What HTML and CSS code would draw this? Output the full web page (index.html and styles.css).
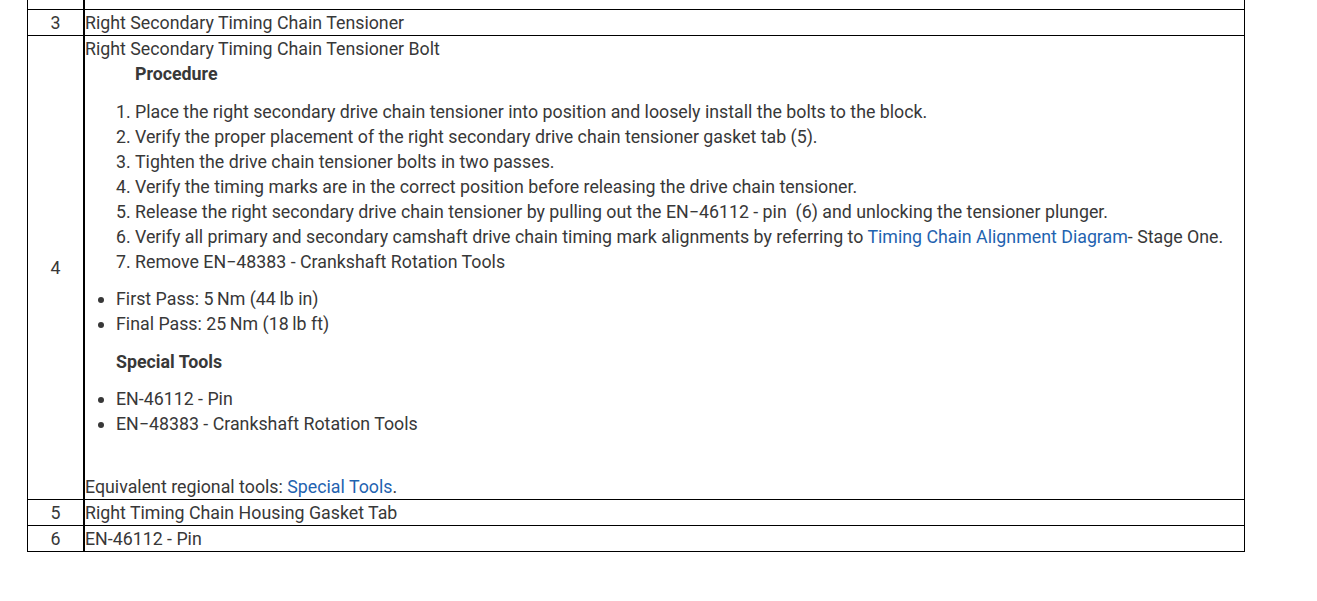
FILE: index.html
```html
<!DOCTYPE html>
<html>
<head>
<meta charset="utf-8">
<link rel="stylesheet" href="styles.css">
</head>
<body>
<table class="parts">
  <tr class="cut"><td class="num"></td><td class="desc"></td></tr>
  <tr><td class="num">3</td><td class="desc">Right Secondary Timing Chain Tensioner</td></tr>
  <tr>
    <td class="num">4</td>
    <td class="desc">
      <div>Right Secondary Timing Chain Tensioner Bolt</div>
      <div class="proc-title">Procedure</div>
      <ol class="steps">
        <li>Place the right secondary drive chain tensioner into position and loosely install the bolts to the block.</li>
        <li>Verify the proper placement of the right secondary drive chain tensioner gasket tab (5).</li>
        <li>Tighten the drive chain tensioner bolts in two passes.</li>
        <li>Verify the timing marks are in the correct position before releasing the drive chain tensioner.</li>
        <li>Release the right secondary drive chain tensioner by pulling out the EN&minus;46112 - pin &nbsp;(6) and unlocking the tensioner plunger.</li>
        <li>Verify all primary and secondary camshaft drive chain timing mark alignments by referring to <a class="link">Timing Chain Alignment Diagram</a>- Stage One.</li>
        <li>Remove EN&minus;48383 - Crankshaft Rotation Tools</li>
      </ol>
      <ul class="bullets">
        <li>First Pass: 5&#8201;Nm (44&#8201;lb in)</li>
        <li>Final Pass: 25&#8201;Nm (18&#8201;lb ft)</li>
      </ul>
      <div class="tools-title">Special Tools</div>
      <ul class="bullets">
        <li>EN-46112 - Pin</li>
        <li>EN&minus;48383 - Crankshaft Rotation Tools</li>
      </ul>
      <div class="regional">Equivalent regional tools: <a class="link">Special Tools</a>.</div>
    </td>
  </tr>
  <tr><td class="num">5</td><td class="desc">Right Timing Chain Housing Gasket Tab</td></tr>
  <tr><td class="num">6</td><td class="desc">EN-46112 - Pin</td></tr>
</table>
</body>
</html>
```
FILE: styles.css
```css
html, body {
  margin: 0;
  padding: 0;
  background: #ffffff;
}
body {
  font-family: Roboto, "Liberation Sans", sans-serif;
  font-size: 17.8px;
  font-weight: 400;
  line-height: 25px;
  color: #383838;
}
.parts {
  border-collapse: collapse;
  margin-left: 27px;
  width: 1218px;
}
.parts td {
  border: 1px solid #000000;
  padding: 0;
  vertical-align: middle;
}
.parts td.num {
  width: 55px;
  text-align: center;
  border-right: 2px solid #000000;
}
.parts tr.cut td {
  height: 9px;
  border-top: none;
}
.proc-title {
  font-weight: 700;
  padding-left: 50px;
}
.steps {
  margin: 13px 0 12px 0;
  padding-left: 50px;
}
.bullets {
  margin: 0;
  padding-left: 31px;
}
.tools-title {
  font-weight: 700;
  padding-left: 31px;
  margin: 13px 0 12px 0;
}
.regional {
  margin-top: 38px;
}
.link {
  color: #1f63b0;
}
```
